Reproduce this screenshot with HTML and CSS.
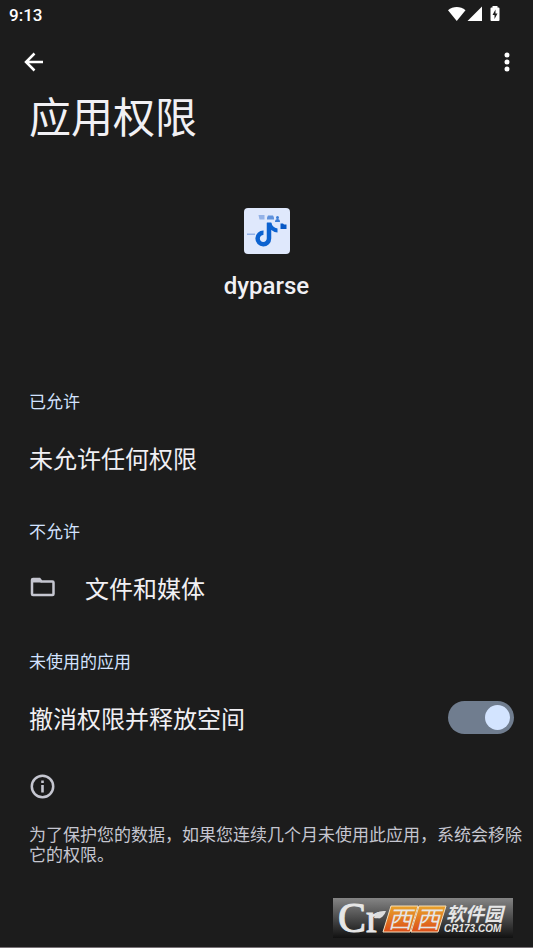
FILE: index.html
```html
<!DOCTYPE html>
<html lang="zh-CN">
<head>
<meta charset="utf-8">
<meta name="viewport" content="width=device-width, initial-scale=1">
<title>应用权限</title>
<link rel="stylesheet" href="styles.css">
</head>
<body>
<div class="status">
  <span class="clock">9:13</span>
  <svg class="status-icons" viewBox="0 0 54 18" aria-hidden="true">
    <path d="M0 4.2C5 -.1 12.500 -.1 17.500 4.200L8.750 15z"/>
    <path d="M34 .5V15H19.500z"/>
    <path fill-rule="evenodd" d="M44.500 0h5v1.500h1q1 0 1 1V14q0 1-1 1h-7q-1 0-1-1V2.500q0-1 1-1h1zM47.500 3.500L44.500 9H46.500V13L49.500 7.500H47.500z"/>
  </svg>
</div>
<header class="toolbar">
  <button class="icon-button" aria-label="返回">
    <svg class="icon" viewBox="0 0 28 28"><path class="stroke" d="M24 14H7M15.500 5.500L7 14l8.500 8.500"/></svg>
  </button>
  <button class="icon-button" aria-label="更多选项">
    <svg class="icon" viewBox="0 0 28 28"><circle cx="14" cy="7" r="2.500"/><circle cx="14" cy="14" r="2.500"/><circle cx="14" cy="21" r="2.500"/></svg>
  </button>
</header>
<main>
  <h1>应用权限</h1>
  <div class="app">
    <svg class="app-icon" viewBox="0 0 46 46" aria-hidden="true">
      <rect width="46" height="46" rx="4" fill="#dfe8fc"/>
      <path d="M3 25.500h8v1.500H3zM14.500 7h6v4.500h-5z" fill="#94b2e7"/>
      <path d="M24 7.500h5l1 2v2h-7v-2z" fill="#5f91dc"/>
      <circle cx="33.500" cy="9.500" r="1.500" fill="#397bd5"/><path d="M31 14q0-3 2.500-3t2.500 3z" fill="#397bd5"/>
      <path d="M36.500 15.500h2.500l1 1h2.500v4.500h-6z" fill="#0758c5"/>
      <path d="M25 15v15.500a5.700 5.700 0 1 1-5.500-5.700" fill="none" stroke="#0c62d0" stroke-width="4.500"/>
      <path d="M22.750 14.500h4.500q1 5 6.250 6v4q-4-.5-7-3z" fill="#0c62d0"/>
    </svg>
    <p class="app-name">dyparse</p>
  </div>
  <section>
    <h2>已允许</h2>
    <p class="row">未允许任何权限</p>
  </section>
  <section>
    <h2>不允许</h2>
    <a class="row" href="#files">
      <svg class="icon muted" viewBox="0 0 28 28" aria-hidden="true"><path class="stroke" d="M4 6h6.500l2 2.500h11q1 0 1 1V21q0 1-1 1H4q-1 0-1-1V7q0-1 1-1z"/><path d="M3 6h7.500l2 3.500H3z"/></svg>
      <span>文件和媒体</span>
    </a>
  </section>
  <section>
    <h2>未使用的应用</h2>
    <div class="row">
      <label for="revoke">撤消权限并释放空间</label>
      <input class="switch" id="revoke" type="checkbox" role="switch" checked>
    </div>
  </section>
  <div class="note">
    <svg class="icon muted" viewBox="0 0 28 28" aria-hidden="true"><circle class="stroke" cx="13.500" cy="13.500" r="10.700"/><path d="M12.200 12h2.600v7.500h-2.600zM12.200 7.500h2.600v2.600h-2.600z"/></svg>
    <p>为了保护您的数据，如果您连续几个月未使用此应用，系统会移除它的权限。</p>
  </div>
</main>
<footer>
  <svg class="brand" viewBox="0 0 180 40" role="img" aria-label="Cr 西西软件园 CR173.COM">
    <defs>
      <linearGradient id="plate" x2="0" y2="1"><stop stop-color="#858585"/><stop offset="1" stop-color="#111"/></linearGradient>
      <linearGradient id="orange" x2="0" y2="1"><stop stop-color="#e8a32c"/><stop offset="1" stop-color="#dc4d18"/></linearGradient>
    </defs>
    <rect width="180" height="40" fill="url(#plate)"/>
    <text class="brand-serif" x="5" y="34" font-size="42">Cr</text>
    <path d="M41 20q1-8 12-7-3 9-12 7z" fill="#ddd"/>
    <path d="M58 8h27l-8 26H50zM86 8h27l-8 26H78z" fill="url(#orange)" stroke="#f5dfbd"/>
    <text class="brand-cjk" x="55" y="30" font-size="24">西</text>
    <text class="brand-cjk" x="83" y="30" font-size="24">西</text>
    <text class="brand-cjk brand-bold" x="113" y="23" font-size="19">软件园</text>
    <text class="brand-latin" x="111" y="34" font-size="10">CR173.COM</text>
  </svg>
</footer>
</body>
</html>
```

FILE: styles.css
```css
* { box-sizing: border-box; }
body {
  margin: 0;
  min-height: 100vh;
  display: flex;
  flex-direction: column;
  background: #1c1c1c;
  color: #f1f0f4;
  border-bottom: 1px solid #777175;
  font-family: Roboto, "Noto Sans CJK SC", sans-serif;
}
h1, h2, p { margin: 0; font-weight: 400; }
svg { display: block; fill: currentColor; flex: none; overflow: visible; }
.stroke { fill: none; stroke: currentColor; stroke-width: 2.5; }
.status {
  height: 30px;
  padding: 0 31px 0 9px;
  display: flex;
  align-items: center;
  justify-content: space-between;
  color: #fff;
}
.clock { font-size: 17px; font-weight: 500; }
.status-icons { width: 54px; height: 18px; }
.toolbar {
  height: 63px;
  padding: 0 6px 0 13px;
  display: flex;
  align-items: center;
  justify-content: space-between;
}
.icon-button {
  width: 40px;
  height: 40px;
  padding: 6px;
  border: 0;
  background: none;
  color: #fff;
}
.icon { width: 28px; height: 28px; }
.muted { color: #c5c6d0; }
main { padding: 0 19px 0 29px; }
h1 { font-size: 42px; line-height: 52px; }
.app {
  padding: 63px 10px 80px 0;
  display: flex;
  flex-direction: column;
  align-items: center;
  gap: 16px;
}
.app-icon { width: 46px; height: 46px; }
.app-name { font-size: 24px; line-height: 33px; font-weight: 500; }
section { margin-bottom: 21px; }
h2 { font-size: 17px; line-height: 39px; color: #d3e3ff; }
.row {
  min-height: 70px;
  display: flex;
  align-items: center;
  gap: 28px;
  font-size: 24px;
  color: inherit;
  text-decoration: none;
}
.row label { flex: 1; }
.switch {
  appearance: none;
  width: 66px;
  height: 33px;
  margin: 0;
  padding: 4px;
  display: flex;
  justify-content: flex-end;
  border-radius: 17px;
  background: #707d8f;
}
.switch::before {
  content: "";
  width: 25px;
  height: 25px;
  border-radius: 50%;
  background: #d3e4ff;
}
.switch:not(:checked) { justify-content: flex-start; }
.note { color: #c5c6d0; margin-right: -10px; }
.note p { margin-top: 24px; font-size: 17px; line-height: 20px; }
footer {
  margin-top: auto;
  padding: 0 20px 9px;
  display: flex;
  justify-content: flex-end;
}
.brand { width: 180px; height: 40px; }
.brand text { fill: #e6e6e6; }
.brand .brand-serif { font-family: "Liberation Serif", serif; stroke: #e6e6e6; }
.brand-cjk { font-family: "Noto Sans CJK SC", sans-serif; font-style: italic; }
.brand-bold { font-weight: 700; }
.brand-latin { font-family: "Liberation Sans", sans-serif; font-weight: 700; font-style: italic; }
```
